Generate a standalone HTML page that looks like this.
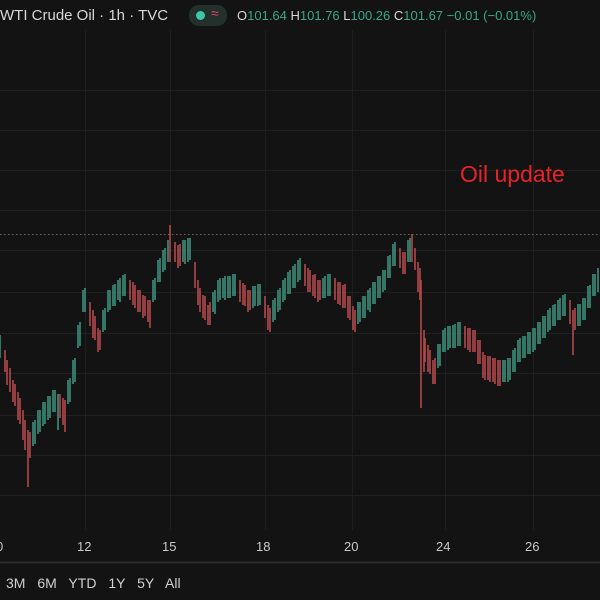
<!DOCTYPE html><html><head><style>
body{margin:0;width:600px;height:600px;background:#131313;overflow:hidden;font-family:"Liberation Sans",sans-serif;position:relative}
.t{position:absolute;white-space:nowrap}
</style></head><body>
<svg width="600" height="600" style="position:absolute;left:0;top:0">
<g stroke="#1f1f1f" stroke-width="1">
<line x1="0" y1="250.5" x2="600" y2="250.5"/><line x1="0" y1="292.5" x2="600" y2="292.5"/><line x1="0" y1="333.5" x2="600" y2="333.5"/><line x1="0" y1="373.5" x2="600" y2="373.5"/><line x1="0" y1="415.5" x2="600" y2="415.5"/><line x1="0" y1="455.5" x2="600" y2="455.5"/><line x1="0" y1="210.5" x2="600" y2="210.5"/><line x1="0" y1="170.5" x2="600" y2="170.5"/><line x1="0" y1="130.5" x2="600" y2="130.5"/><line x1="0" y1="90.5" x2="600" y2="90.5"/><line x1="0" y1="495.5" x2="600" y2="495.5"/>
<line x1="85.5" y1="30" x2="85.5" y2="530"/><line x1="170.5" y1="30" x2="170.5" y2="530"/><line x1="265.5" y1="30" x2="265.5" y2="530"/><line x1="352.5" y1="30" x2="352.5" y2="530"/><line x1="445.5" y1="30" x2="445.5" y2="530"/><line x1="533.5" y1="30" x2="533.5" y2="530"/>
</g>
<line x1="0" y1="234.5" x2="600" y2="234.5" stroke="#666" stroke-dasharray="1.5 2.5"/>
<line x1="0" y1="562.5" x2="600" y2="562.5" stroke="#2a2a2a" stroke-width="2"/>
<path stroke="#b2494d" stroke-width="1.6" fill="none" d="M5 350V372M7 360V385M10 368V392M13 380V402M15 384V406M18 392V420M20 398V424M23 410V440M25 420V450M28 430V487M30 432V458M60 394V418M63 398V425M65 400V432M90 302V326M93 310V338M95 316V340M98 328V352M100 330V350M130 280V300M133 282V305M135 285V308M138 290V312M140 290V312M143 295V318M145 296V316M148 300V322M150 300V328M170 225V262M175 242V262M178 245V268M180 244V266M195 262V288M198 280V305M200 288V312M203 295V318M205 296V320M208 305V325M210 302V325M240 280V302M243 283V305M245 285V306M248 290V312M250 290V310M265 296V318M268 305V330M270 308V332M305 264V286M308 268V292M310 270V292M313 275V296M315 274V298M318 280V302M320 280V300M335 278V300M338 282V304M340 282V305M343 285V308M345 284V308M348 296V318M350 296V320M353 306V330M355 310V332M400 248V268M403 252V274M405 252V274M412 234V262M415 248V270M418 262V292M420 268V300M421 280V408M424 330V372M425 338V362M428 345V372M430 350V374M433 360V384M435 358V384M465 326V348M468 328V350M470 328V352M473 330V352M475 330V352M478 340V364M480 340V364M483 352V378M485 355V380M488 356V380M490 356V382M493 358V382M495 358V384M498 360V386M500 360V386M570 300V324M573 310V355M575 308V330"/>
<path stroke="#3d8f7c" stroke-width="1.6" fill="none" d="M0 335V358M33 422V446M35 420V444M38 410V434M40 410V432M43 402V426M45 402V424M48 396V420M50 396V418M53 390V412M55 390V412M58 394V430M68 380V404M70 378V402M73 360V384M75 358V382M78 325V348M80 322V346M83 290V312M85 288V312M103 310V332M105 308V330M108 290V312M110 290V310M113 285V306M115 284V306M118 280V300M120 278V302M123 275V296M125 274V296M153 280V302M155 278V300M158 260V282M160 258V282M163 250V272M165 248V270M168 240V262M183 240V262M185 240V264M188 238V262M190 238V260M213 292V312M215 290V314M218 280V302M220 278V300M223 278V298M225 276V300M228 276V298M230 276V298M233 274V296M235 274V296M253 286V308M255 286V306M258 284V306M260 284V305M273 300V322M275 298V320M278 290V312M280 288V310M283 280V302M285 278V300M288 272V294M290 270V294M293 266V288M295 264V288M298 260V282M300 258V280M323 278V298M325 276V298M328 274V296M330 274V296M358 302V324M360 302V322M363 296V318M365 296V318M368 290V310M370 288V312M373 282V304M375 282V304M378 276V298M380 276V298M383 270V292M385 270V290M388 256V278M390 255V278M393 244V266M395 242V266M408 240V262M410 238V262M438 344V368M440 344V366M443 330V352M445 328V352M448 326V350M450 326V348M453 325V348M455 324V348M458 322V346M460 322V346M503 360V382M505 360V382M508 358V382M510 358V380M513 350V372M515 348V372M518 340V362M520 338V362M523 336V358M525 336V358M528 332V354M530 332V354M533 328V352M535 328V350M538 322V344M540 322V344M543 316V338M545 316V338M548 310V332M550 308V330M553 305V326M555 304V326M558 300V320M560 298V320M563 295V316M565 294V316M578 304V326M580 304V326M583 298V320M585 298V320M588 286V308M590 285V308M593 274V296M595 274V296M598 268V292"/>
</svg>
<div class="t" style="left:0;top:7px;font-size:15px;color:#d8d8d8">WTI Crude Oil · 1h · TVC</div>
<div class="t" style="left:189px;top:5px;width:38px;height:21px;border-radius:10px;background:#23302c"></div>
<div class="t" style="left:196px;top:11px;width:9px;height:9px;border-radius:5px;background:#3ec9a6"></div>
<div class="t" style="left:211px;top:5px;font-size:14px;color:#e0446a">≈</div>
<div class="t" style="left:237px;top:8px;font-size:13px;color:#d8d8d8">O<span style="color:#3aa88a">101.64</span> H<span style="color:#3aa88a">101.76</span> L<span style="color:#3aa88a">100.26</span> C<span style="color:#3aa88a">101.67</span> <span style="color:#3aa88a">−0.01 (−0.01%)</span></div>
<div class="t" style="left:460px;top:161px;font-size:23px;color:#e8222b">Oil update</div>
<div style="position:absolute;top:539px;left:0;font-size:13px;color:#c8c8c8">
<span class="t" style="left:-4px">0</span><span class="t" style="left:77px">12</span><span class="t" style="left:162px">15</span><span class="t" style="left:256px">18</span><span class="t" style="left:344px">20</span><span class="t" style="left:436px">24</span><span class="t" style="left:525px">26</span></div>
<div class="t" style="left:6px;top:575px;font-size:14px;color:#d0d0d0;word-spacing:8px">3M 6M YTD 1Y 5Y All</div>
</body></html>
